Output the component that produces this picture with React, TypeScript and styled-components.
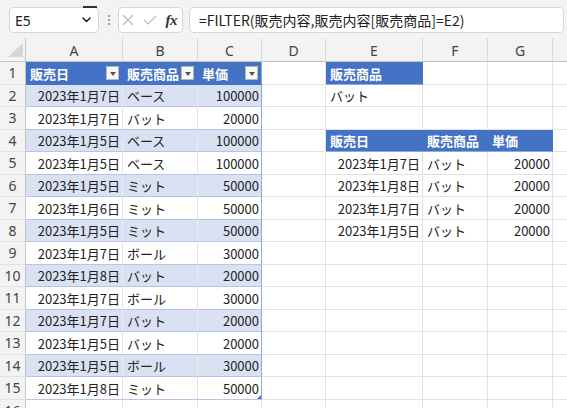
import React from 'react';
import styled, { createGlobalStyle, css } from 'styled-components';

const GlobalStyle = createGlobalStyle`
  html, body { margin: 0; padding: 0; background: #fff; overflow: hidden; }
  body { width: 567px; height: 408px; font-family: "Noto Sans CJK JP", "Noto Sans", sans-serif; }
`;

const Window = styled.div`
  width: 567px;
  height: 408px;
  overflow: hidden;
  display: flex;
  flex-direction: column;
  background: #fff;
`;

const Toolbar = styled.div`
  flex: 0 0 38px;
  box-sizing: border-box;
  display: flex;
  align-items: flex-start;
  padding: 7px 0 0 9px;
  background: #f3f3f3;
`;

const Box = styled.div`
  box-sizing: border-box;
  height: 26px;
  background: #fff;
  border: 1px solid #d6d6d6;
  border-radius: 4px;
  display: flex;
  align-items: center;
  flex: none;
`;

const NameBox = styled(Box)`
  position: relative;
  width: 90px;
  padding: 0 6px 0 5px;
  font-family: "Noto Sans", sans-serif;
  font-size: 14px;
  color: #222;
  &::after {
    content: '';
    position: absolute;
    top: -2px;
    right: 1px;
    width: 14px;
    height: 2px;
    background: #333;
  }
`;

const Chevron = styled.svg`
  margin-left: auto;
  margin-right: 1px;
`;

const Dots = styled.div`
  width: 19px;
  height: 26px;
  flex: none;
  display: flex;
  flex-direction: column;
  align-items: center;
  justify-content: center;
  gap: 2px;
  & > span {
    width: 2px;
    height: 2px;
    border-radius: 50%;
    background: #8a8a8a;
  }
`;

const FxBox = styled(Box)`
  width: 65px;
  padding: 0 3px 0 3px;
  justify-content: space-between;
`;

const Fx = styled.span`
  font-family: "Liberation Serif", serif;
  font-style: italic;
  font-weight: bold;
  font-size: 15px;
  color: #333;
  margin-right: 2px;
  letter-spacing: -0.5px;
`;

const FormulaBox = styled(Box)`
  width: 375px;
  margin-left: 6px;
  padding-left: 9px;
  font-size: 14px;
  color: #222;
  white-space: nowrap;
`;

const Sheet = styled.div`
  flex: none;
  display: grid;
  grid-template-columns: 26px 97px 75px 64px 64px 97px 65px 65px 65px;
  grid-template-rows: 24px repeat(16, 22.5px);
`;

const headBase = css`
  box-sizing: border-box;
  background: #f3f3f3;
  color: #444;
  font-family: "Noto Sans", sans-serif;
  font-size: 14px;
  display: flex;
  align-items: center;
  justify-content: center;
`;

const Corner = styled.div`
  ${headBase};
  border-right: 1px solid #c6c6c6;
  border-bottom: 1px solid #c6c6c6;
  align-items: flex-end;
  justify-content: flex-end;
  padding: 0 2px 4px 0;
`;

const ColHead = styled.div`
  ${headBase};
  border-right: 1px solid #dadada;
  border-bottom: 1px solid #c2c2c2;
  padding-top: 1px;
`;

const RowHead = styled.div`
  ${headBase};
  border-right: 1px solid #c6c6c6;
  border-bottom: 1px solid #e1e1e1;
`;

type Variant = 'grid' | 'tableHead' | 'tableBand' | 'tableRow' | 'spillHead';

const variants: Record<Variant, ReturnType<typeof css>> = {
  grid: css`
    background: #fff;
    border-right: 1px solid #e1e1e1;
    border-bottom: 1px solid #e1e1e1;
  `,
  tableHead: css`
    background: #4472c4;
    color: #fff;
    font-weight: bold;
    border-right: 1px solid #4472c4;
    border-bottom: 1px solid #4472c4;
  `,
  tableBand: css`
    background: #d9e1f2;
    border-right: 1px solid #e6ebf6;
    border-bottom: 1px solid #b4c6e7;
  `,
  tableRow: css`
    background: #fff;
    border-right: 1px solid #e1e1e1;
    border-bottom: 1px solid #b4c6e7;
  `,
  spillHead: css`
    background: #4472c4;
    color: #fff;
    font-weight: bold;
    border-right: 1px solid #4472c4;
    border-bottom: 1px solid #8ea9db;
  `,
};

const Cell = styled.div<{ $variant: Variant; $align: 'left' | 'right'; $edge?: boolean }>`
  position: relative;
  box-sizing: border-box;
  display: flex;
  align-items: center;
  justify-content: ${(p) => (p.$align === 'right' ? 'flex-end' : 'space-between')};
  padding: 1px 2px 0 4px;
  font-size: 13px;
  color: #222;
  white-space: nowrap;
  overflow: hidden;
  ${(p) => variants[p.$variant]};
  ${(p) => p.$edge && css`border-right: 1px solid #8ea9db;`}
`;

const FilterButton = styled.span`
  box-sizing: border-box;
  width: 13px;
  height: 14px;
  flex: none;
  margin-right: 1px;
  background: #f7f7f7;
  border: 1px solid #b8b8b8;
  display: flex;
  align-items: center;
  justify-content: center;
  &::after {
    content: '';
    width: 0;
    height: 0;
    border-left: 3.5px solid transparent;
    border-right: 3.5px solid transparent;
    border-top: 4px solid #555;
    margin-top: 1px;
  }
`;

const ResizeHandle = styled.span`
  position: absolute;
  right: 0;
  bottom: 0;
  width: 0;
  height: 0;
  border-left: 4px solid transparent;
  border-bottom: 4px solid #4472c4;
`;

type CellDef = {
  text?: string;
  variant: Variant;
  align?: 'left' | 'right';
  filter?: boolean;
  edge?: boolean;
  handle?: boolean;
};

const tableRows: [string, string, string][] = [
  ['2023年1月7日', 'ベース', '100000'],
  ['2023年1月7日', 'バット', '20000'],
  ['2023年1月5日', 'ベース', '100000'],
  ['2023年1月5日', 'ベース', '100000'],
  ['2023年1月5日', 'ミット', '50000'],
  ['2023年1月6日', 'ミット', '50000'],
  ['2023年1月5日', 'ミット', '50000'],
  ['2023年1月7日', 'ボール', '30000'],
  ['2023年1月8日', 'バット', '20000'],
  ['2023年1月7日', 'ボール', '30000'],
  ['2023年1月7日', 'バット', '20000'],
  ['2023年1月5日', 'バット', '20000'],
  ['2023年1月5日', 'ボール', '30000'],
  ['2023年1月8日', 'ミット', '50000'],
];

const spillRows: [string, string, string][] = [
  ['2023年1月7日', 'バット', '20000'],
  ['2023年1月8日', 'バット', '20000'],
  ['2023年1月7日', 'バット', '20000'],
  ['2023年1月5日', 'バット', '20000'],
];

// the H column lies past the right edge; its letter is not in view
const columns = ['A', 'B', 'C', 'D', 'E', 'F', 'G', ''];
const headers = ['販売日', '販売商品', '単価'];

const blank: CellDef = { variant: 'grid' };

function rowCells(r: number): CellDef[] {
  const cells: CellDef[] = [];
  if (r === 1) {
    headers.forEach((h, i) => cells.push({ text: h, variant: 'tableHead', filter: true, edge: i === 2 }));
  } else if (r <= 15) {
    const [d, p, v] = tableRows[r - 2];
    const variant: Variant = r % 2 === 0 ? 'tableBand' : 'tableRow';
    cells.push({ text: d, variant, align: 'right' });
    cells.push({ text: p, variant });
    cells.push({ text: v, variant, align: 'right', edge: true, handle: r === 15 });
  } else {
    cells.push(blank, blank, blank);
  }
  cells.push(blank);
  if (r === 1) {
    cells.push({ text: '販売商品', variant: 'spillHead' }, blank, blank);
  } else if (r === 2) {
    cells.push({ text: 'バット', variant: 'grid' }, blank, blank);
  } else if (r === 4) {
    headers.forEach((h) => cells.push({ text: h, variant: 'spillHead' }));
  } else if (r >= 5 && r <= 8) {
    const [d, p, v] = spillRows[r - 5];
    cells.push(
      { text: d, variant: 'grid', align: 'right' },
      { text: p, variant: 'grid' },
      { text: v, variant: 'grid', align: 'right' },
    );
  } else {
    cells.push(blank, blank, blank);
  }
  cells.push(blank);
  return cells;
}

export default function App() {
  const rows = Array.from({ length: 16 }, (_, i) => i + 1);
  return (
    <>
      <GlobalStyle />
      <Window>
        <Toolbar>
          <NameBox>
            E5
            <Chevron width="9" height="6" viewBox="0 0 9 6">
              <path d="M1 1 L4.5 4.5 L8 1" fill="none" stroke="#222" strokeWidth="1.6" strokeLinecap="round" strokeLinejoin="round" />
            </Chevron>
          </NameBox>
          <Dots>
            <span />
            <span />
            <span />
          </Dots>
          <FxBox>
            <svg width="12" height="12" viewBox="0 0 12 12">
              <path d="M1 1 L11 11 M11 1 L1 11" stroke="#b9b9b9" strokeWidth="1.1" fill="none" />
            </svg>
            <svg width="14" height="10" viewBox="0 0 14 10">
              <path d="M1 5 L5 9 L13 1" stroke="#b9b9b9" strokeWidth="1.1" fill="none" />
            </svg>
            <Fx>fx</Fx>
          </FxBox>
          <FormulaBox>=FILTER(販売内容,販売内容[販売商品]=E2)</FormulaBox>
        </Toolbar>
        <Sheet>
          <Corner>
            <svg width="15" height="14" viewBox="0 0 15 14">
              <path d="M0 14 L15 14 L15 0 Z" fill="#d6d6d6" />
            </svg>
          </Corner>
          {columns.map((c, i) => (
            <ColHead key={i}>{c}</ColHead>
          ))}
          {rows.map((r) => (
            <React.Fragment key={r}>
              <RowHead>{r}</RowHead>
              {rowCells(r).map((cell, i) => (
                <Cell key={i} $variant={cell.variant} $align={cell.align ?? 'left'} $edge={cell.edge}>
                  {cell.text}
                  {cell.filter && <FilterButton />}
                  {cell.handle && <ResizeHandle />}
                </Cell>
              ))}
            </React.Fragment>
          ))}
        </Sheet>
      </Window>
    </>
  );
}
